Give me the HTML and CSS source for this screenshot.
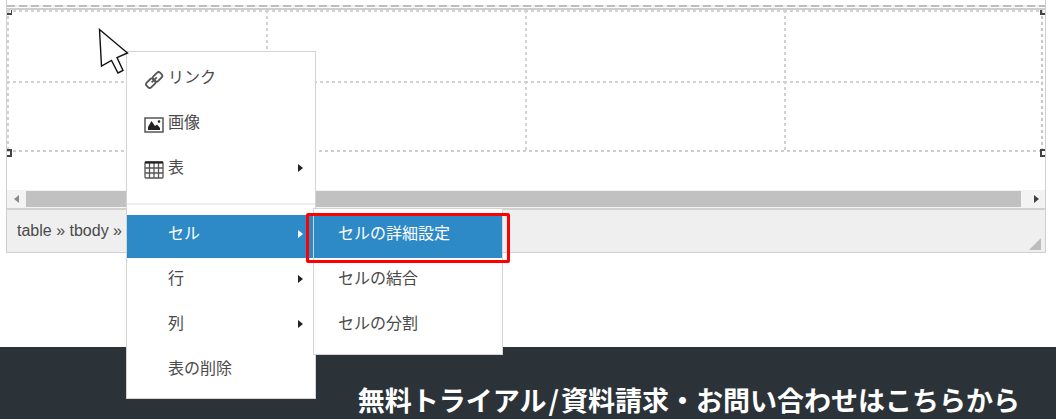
FILE: index.html
```html
<!DOCTYPE html>
<html lang="ja">
<head>
<meta charset="utf-8">
<title>エディタ</title>
<link rel="stylesheet" href="styles.css">
</head>
<body>
<main class="editor">
  <div class="frame-edge"></div>
  <div class="canvas">
    <table class="grid" aria-label="表">
      <tbody>
        <tr><td></td><td></td><td></td><td></td></tr>
        <tr><td></td><td></td><td></td><td></td></tr>
      </tbody>
    </table>
    <span class="handle top-left"></span>
    <span class="handle top-right"></span>
    <span class="handle bottom-left"></span>
    <span class="handle bottom-right"></span>
  </div>
  <div class="scrollbar">
    <button class="scroll-button" aria-label="左へ"><svg width="5" height="8" viewBox="0 0 5 8"><path d="M5 0v8L0 4z" fill="#8a8a8a"/></svg></button>
    <div class="thumb"></div>
    <button class="scroll-button" aria-label="右へ"><svg width="5" height="8" viewBox="0 0 5 8"><path d="M0 0v8l5-4z" fill="#404040"/></svg></button>
  </div>
  <div class="status">
    <span class="path">table » tbody »</span>
    <svg class="grip" width="12" height="12" viewBox="0 0 12 12"><path d="M12 0v12H0z" fill="#bcbcbc"/></svg>
  </div>
</main>
<footer class="contact">
  <h2 class="contact-title">無料トライアル<span class="slash">/</span>資料請求・お問い合わせはこちらから</h2>
</footer>

<div class="menu" role="menu">
  <button class="item" role="menuitem">
    <svg class="icon" width="20" height="20" viewBox="0 0 20 20" fill="none" stroke="#555" stroke-width="1.8"><rect x="8.800" y="3.500" width="9.500" height="6.600" rx="2.400" transform="rotate(-45 13.600 6.800)"/><rect x="2" y="9.900" width="9.500" height="6.600" rx="2.400" transform="rotate(-45 6.800 13.200)"/><path d="M7.600 12.400l5.200-5"/></svg>
    <span class="label">リンク</span>
  </button>
  <button class="item" role="menuitem">
    <svg class="icon" width="20" height="20" viewBox="0 0 20 20"><rect x="1" y="3" width="18" height="14" fill="#fff" stroke="#555" stroke-width="1.5"/><path d="M4 15v-3l3.500-6 3.500 5 2-1.500 3 3.500v2z" fill="#222"/><circle cx="15" cy="6.500" r="1.300" fill="#222"/></svg>
    <span class="label">画像</span>
  </button>
  <button class="item" role="menuitem">
    <svg class="icon" width="20" height="20" viewBox="0 0 20 20" fill="none" stroke="#555" stroke-width="1.3"><rect x="1" y="2" width="18" height="16" rx="1"/><path d="M1 8h18M1 13h18M5.500 3v15M10 3v15M14.500 3v15"/><path d="M1 2.500h18" stroke="#222" stroke-width="2.200"/></svg>
    <span class="label">表</span><span class="arrow"></span>
  </button>
  <hr class="separator">
  <button class="item active" role="menuitem"><span class="label">セル</span><span class="arrow"></span></button>
  <button class="item" role="menuitem"><span class="label">行</span><span class="arrow"></span></button>
  <button class="item" role="menuitem"><span class="label">列</span><span class="arrow"></span></button>
  <button class="item" role="menuitem"><span class="label">表の削除</span></button>
</div>

<div class="menu submenu" role="menu">
  <button class="item active" role="menuitem"><span class="label">セルの詳細設定</span></button>
  <button class="item" role="menuitem"><span class="label">セルの結合</span></button>
  <button class="item" role="menuitem"><span class="label">セルの分割</span></button>
</div>
<div class="highlight"></div>
<svg class="cursor" width="32" height="48" viewBox="0 0 32 48"><path d="M1.500 1.500L29.500 25 19 29.500 25 42.500 20 45 13.500 32.500 3.500 38z" fill="#fff" stroke="#111" stroke-width="1.400"/></svg>
</body>
</html>
```
FILE: styles.css
```css
* {
  box-sizing: border-box;
}

body {
  display: flex;
  flex-direction: column;
  min-height: 100vh;
  margin: 0;
  overflow: hidden;
  background: #fff;
  color: #4a4a4a;
  font-family: "Liberation Sans", "Noto Sans CJK JP", sans-serif;
}

button {
  margin: 0;
  border: 0;
  padding: 0;
  background: none;
  color: inherit;
  font: inherit;
}

.editor {
  margin: 0 10px 0 6px;
  border: solid #cfcfcf;
  border-width: 0 1px 1px;
}

.frame-edge {
  height: 10px;
  border-bottom: 2px solid #cecece;
  background: repeating-linear-gradient(90deg, #bdbdbd 0 8px, #efefef 8px 12px) 0 5px / 100% 2px no-repeat;
}

.canvas {
  position: relative;
  height: 180px;
}

.grid {
  width: calc(100% - 2px);
  border-collapse: collapse;
  table-layout: fixed;
  background: repeating-linear-gradient(180deg, #c6c6c6 0 3px, transparent 3px 6px) right / 2px 100% no-repeat,
    repeating-linear-gradient(90deg, #cecece 0 3px, transparent 3px 6px) bottom / 100% 2px no-repeat;
}

.grid td {
  height: 71px;
  padding: 0;
  background: repeating-linear-gradient(90deg, #d2d2d2 0 3px, transparent 3px 6px) top / 100% 2px no-repeat,
    repeating-linear-gradient(180deg, #d2d2d2 0 3px, transparent 3px 6px) left / 2px 100% no-repeat;
}

.handle {
  position: absolute;
  width: 5px;
  height: 8px;
  border: 2px solid #444;
}

.top-left {
  top: 0;
  left: 0;
  height: 5px;
  border-width: 0 1px 2px 0;
}

.top-right {
  top: 0;
  right: 0;
  height: 5px;
  border-width: 0 0 2px 2px;
}

.bottom-left {
  top: 139px;
  left: 0;
  border-left: 0;
}

.bottom-right {
  top: 139px;
  right: 0;
  border-right: 0;
}

.scrollbar {
  display: flex;
  height: 18px;
  padding: 1px 0;
  background: #f3f3f3;
}

.scroll-button {
  display: flex;
  align-items: center;
  justify-content: center;
  width: 19px;
}

.scroll-button:last-child {
  width: 24px;
  padding-left: 6px;
}

.thumb {
  flex: 1;
  background: #c1c1c1;
}

.status {
  display: flex;
  justify-content: space-between;
  height: 44px;
  border-top: 2px solid #d2d2d2;
  padding: 0 4px 2px 10px;
  background: #efefef;
}

.path {
  font-size: 16px;
  line-height: 42px;
}

.grip {
  align-self: flex-end;
}

.contact {
  flex: 1;
  margin-top: 94px;
  padding: 34px 36px 0;
  background: #2b3338;
  color: #fff;
  text-align: right;
}

.contact-title {
  margin: 0;
  font-family: "Noto Sans CJK JP", sans-serif;
  font-size: 27px;
  font-weight: 700;
  line-height: 38px;
  white-space: nowrap;
}

.slash {
  padding: 0 2px;
}

.menu {
  position: absolute;
  top: 51px;
  left: 126px;
  display: flex;
  flex-direction: column;
  gap: 2px;
  width: 190px;
  border: 1px solid #d4d4d4;
  padding: 7px 0 5px;
  background: #fff;
}

.item {
  display: grid;
  grid-template-columns: 20px 1fr 5px;
  column-gap: 4px;
  align-items: center;
  height: 43px;
  padding: 0 12px 6px 17px;
  font-size: 16px;
  line-height: 24px;
  text-align: left;
}

.icon {
  margin-top: 4px;
}

.label {
  grid-column: 2;
}

.arrow {
  border: solid transparent;
  border-width: 4px 0 4px 5px;
  border-left-color: #222;
}

.active {
  background: #2d8ac7;
  color: #fff;
}

.active .arrow {
  border-left-color: #fff;
}

.separator {
  width: 100%;
  margin: 9px 0 8px;
  border: 0;
  border-top: 2px solid #eee;
}

.submenu {
  top: 208px;
  left: 313px;
  width: 190px;
  padding: 6px 0;
}

.submenu .item {
  display: block;
  padding: 0 0 6px 24px;
}

.highlight {
  position: absolute;
  top: 213px;
  left: 306px;
  width: 204px;
  height: 50px;
  border: 3px solid #f00;
  border-radius: 2px;
}

.cursor {
  position: absolute;
  top: 28px;
  left: 98px;
}
```
